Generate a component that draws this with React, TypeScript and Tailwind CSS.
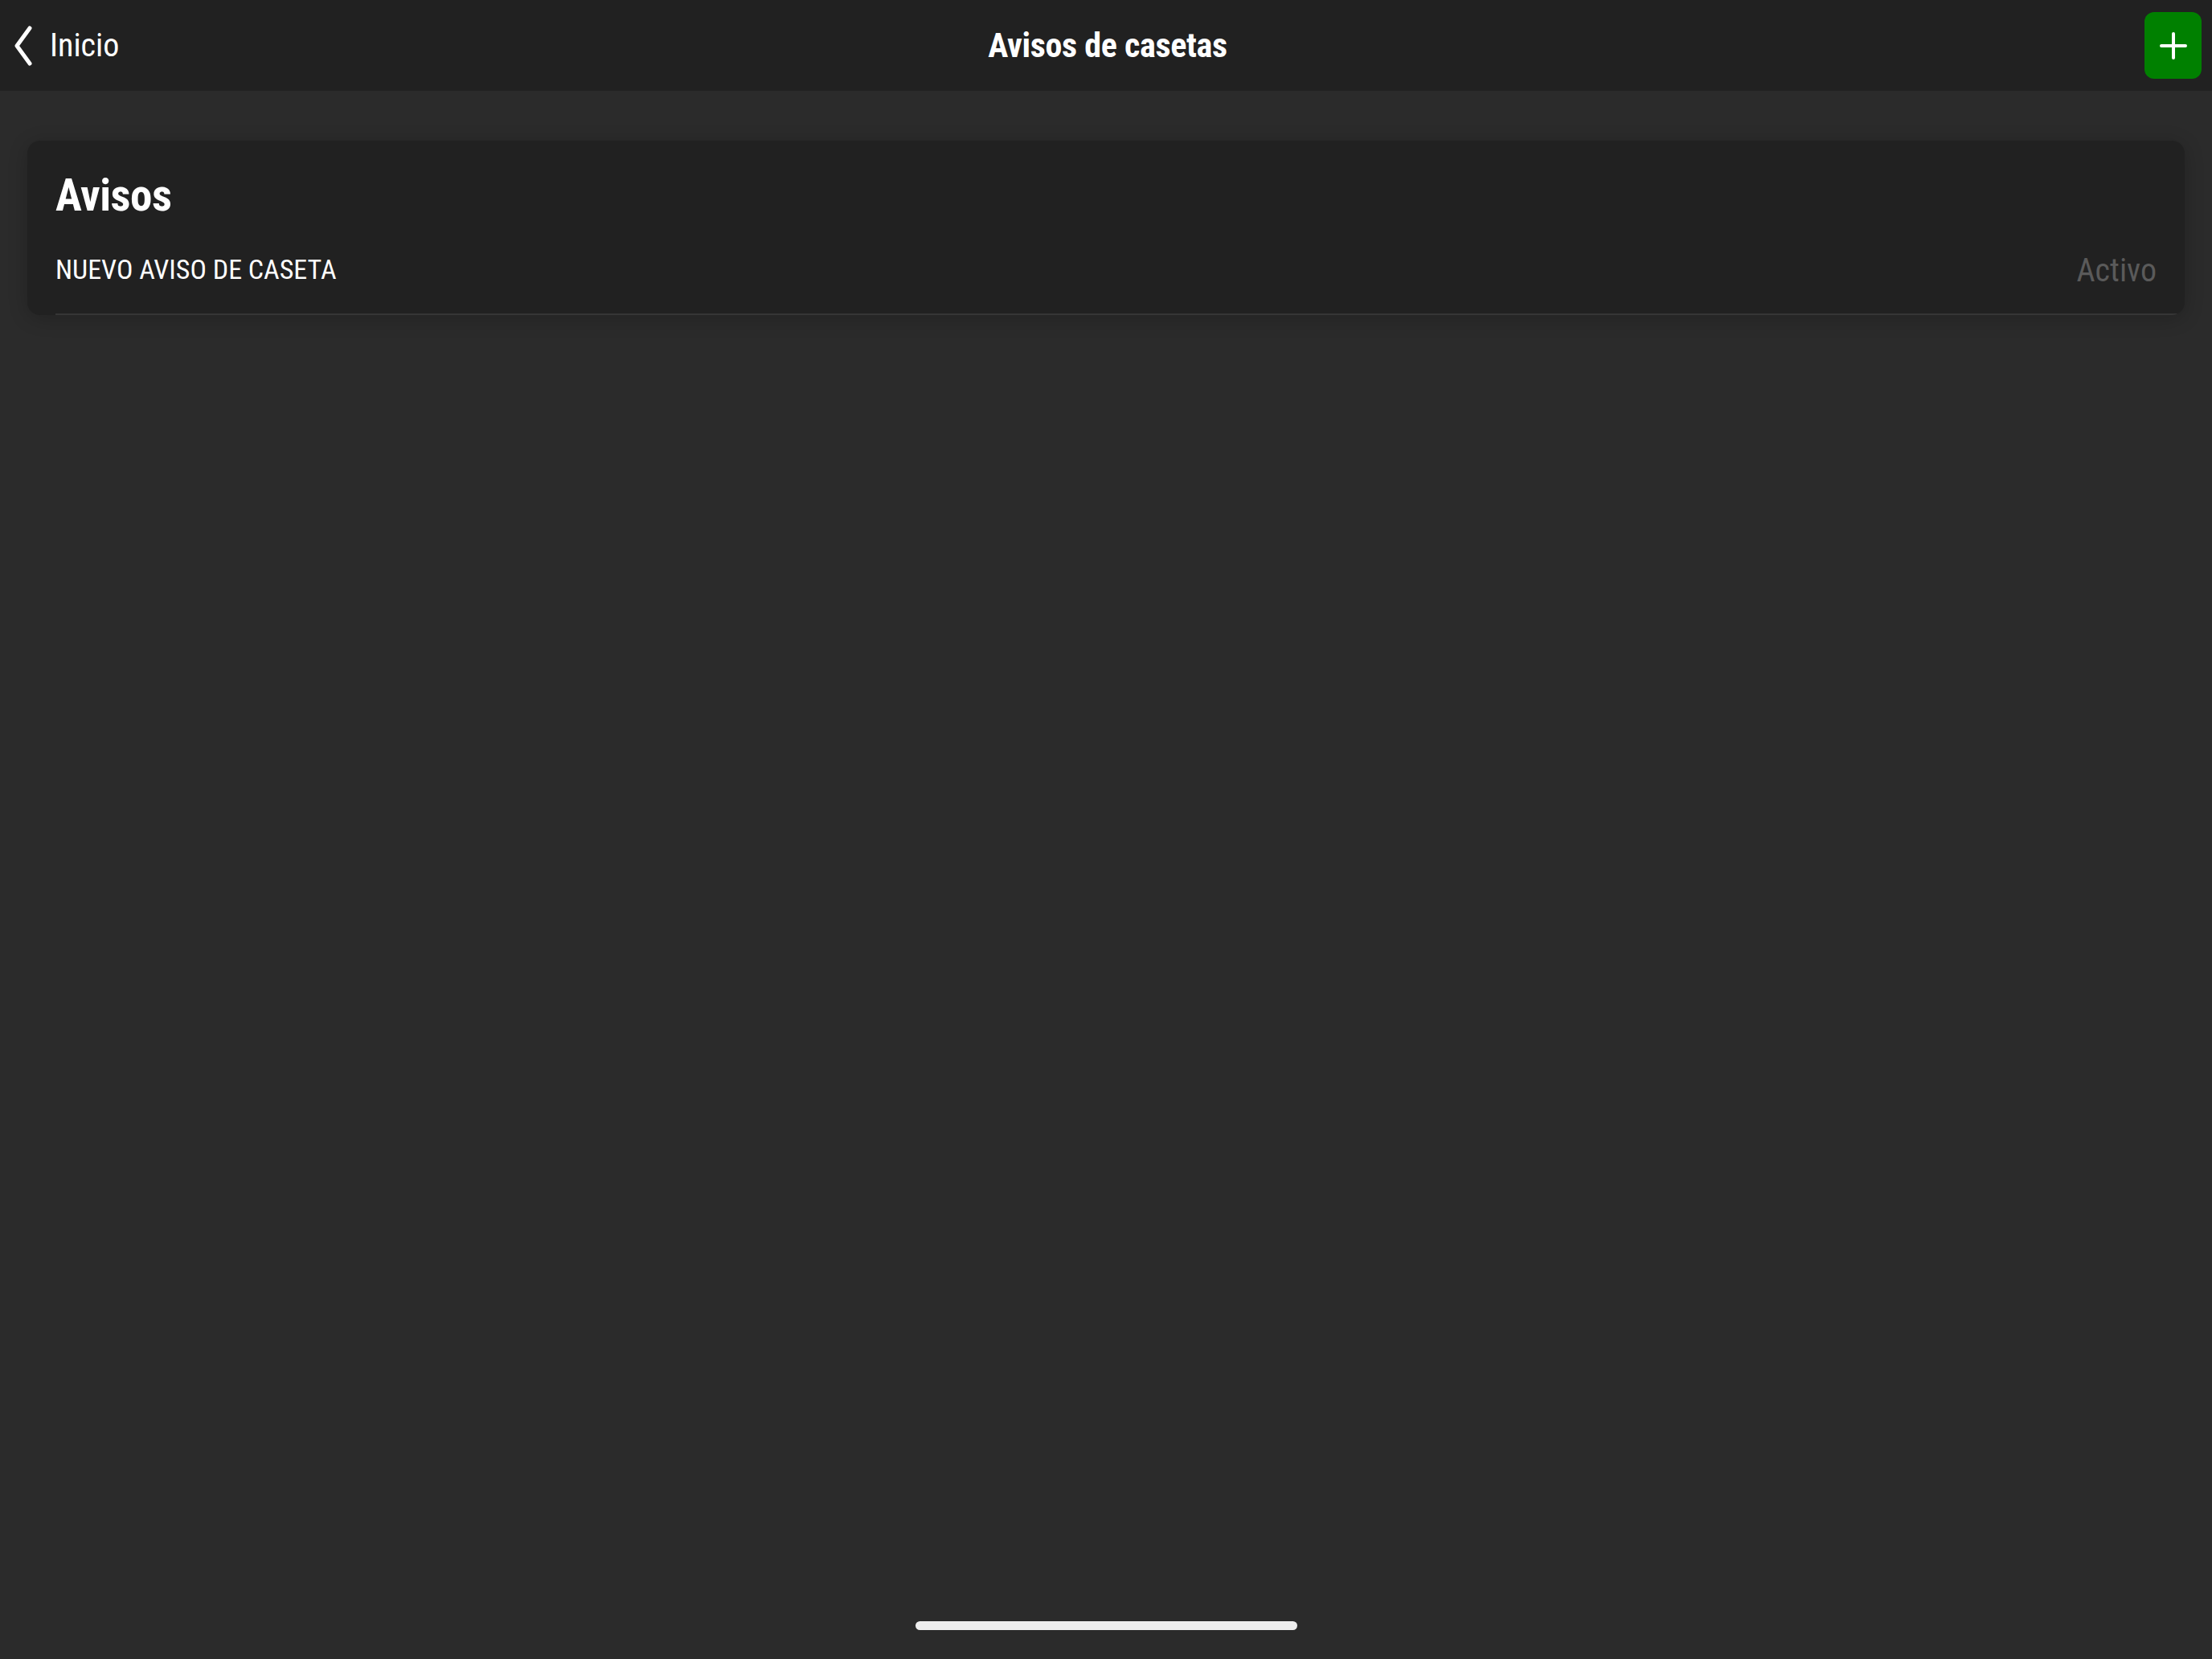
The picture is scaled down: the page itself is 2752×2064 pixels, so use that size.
import React from "react";

const font = { fontFamily: '"Roboto Condensed", "Liberation Sans Narrow", "DejaVu Sans Condensed", Roboto, sans-serif' };

function BackChevron() {
  return (
    <svg width="24" height="50" viewBox="0 0 24 50" fill="none">
      <path d="M20 3 L4 25 L20 47" stroke="#ffffff" strokeWidth="5" strokeLinecap="round" strokeLinejoin="round" />
    </svg>
  );
}

function PlusIcon() {
  return (
    <svg width="34" height="34" viewBox="0 0 34 34" fill="none">
      <path d="M17 2 V32 M2 17 H32" stroke="#ffffff" strokeWidth="4" strokeLinecap="round" />
    </svg>
  );
}

export default function App() {
  return (
    <div className="flex h-[2064px] w-[2752px] flex-col bg-[#2b2b2b] text-white" style={font}>
      <header className="grid h-[113px] grid-cols-[1fr_auto_1fr] items-center bg-[#212121] pl-[17px] pr-[13px]">
        <div className="flex items-center gap-[21px]">
          <BackChevron />
          <span className="text-[40px] leading-none">Inicio</span>
        </div>
        <h1 className="text-[42px] font-bold leading-none tracking-[-0.3px]">Avisos de casetas</h1>
        <div className="flex justify-end">
          <button className="flex h-[83px] w-[71px] items-center justify-center rounded-[12px] bg-[#008000]">
            <PlusIcon />
          </button>
        </div>
      </header>

      <main className="flex-1 px-[34px] pt-[62px]">
        <section className="overflow-hidden rounded-[16px] bg-[#212121] shadow-[0_4px_24px_rgba(0,0,0,0.2)]">
          <h2 className="px-[35px] pt-[41px] text-[55px] font-bold leading-none tracking-[-0.5px]">Avisos</h2>
          <div className="ml-[35px] flex items-baseline justify-between border-b-[2px] border-[#363636] pb-[36px] pr-[35px] pt-[43px]">
            <span className="text-[34px] leading-none">NUEVO AVISO DE CASETA</span>
            <span className="translate-y-[3px] text-[40px] font-normal leading-none text-[#5a5a5a]">Activo</span>
          </div>
        </section>
      </main>

      <div className="flex justify-center pb-[36px]">
        <div className="h-[11px] w-[475px] rounded-full bg-[#eeeeee]" />
      </div>
    </div>
  );
}
